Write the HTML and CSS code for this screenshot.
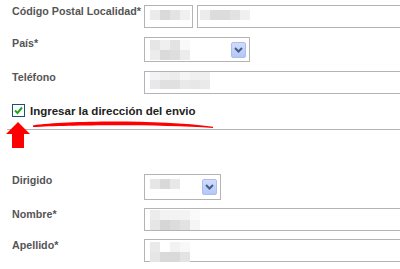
FILE: index.html
```html
<!DOCTYPE html>
<html lang="es">
<head>
    <meta charset="UTF-8">
    <title>Dirección</title>
    <link rel="stylesheet" href="styles.css">
</head>
<body>
    <div class="form">
        <div class="row row-cp">
            <div class="label">Código Postal Localidad*</div>
            <div class="field field-cp"><span class="blur blur-cp"></span></div>
            <div class="field field-city open-end"><span class="blur blur-city"></span></div>
        </div>
        <div class="row row-pais">
            <div class="label">País*</div>
            <div class="field select select-pais">
                <span class="blur blur-pais"></span>
                <span class="drop"><svg width="9" height="6" viewBox="0 0 9 6"><path d="M1 1 L4.5 4.5 L8 1" fill="none" stroke="#4a5c80" stroke-width="2"/></svg></span>
            </div>
        </div>
        <div class="row row-tel">
            <div class="label">Teléfono</div>
            <div class="field field-wide open-end"><span class="blur blur-tel"></span></div>
        </div>

        <div class="check-row">
            <span class="checkbox"><svg width="11" height="11" viewBox="0 0 11 11"><path d="M2 5.5 L4.5 8 L9 2.5" fill="none" stroke="#1fa51f" stroke-width="2"/></svg></span>
            <span class="check-label">Ingresar la dirección del envio</span>
        </div>

        <div class="row row-dir">
            <div class="label">Dirigido</div>
            <div class="field select select-dir">
                <span class="blur blur-dir"></span>
                <span class="drop"><svg width="9" height="6" viewBox="0 0 9 6"><path d="M1 1 L4.5 4.5 L8 1" fill="none" stroke="#4a5c80" stroke-width="2"/></svg></span>
            </div>
        </div>
        <div class="row row-nom">
            <div class="label">Nombre*</div>
            <div class="field field-wide open-end"><span class="blur blur-nom"></span></div>
        </div>
        <div class="row row-ape">
            <div class="label">Apellido*</div>
            <div class="field field-wide open-end"><span class="blur blur-ape"></span></div>
        </div>
    </div>

    <!-- hand-drawn marks over the form -->
    <svg class="marks" width="400" height="269" viewBox="0 0 400 269">
        <path d="M33 125.4 C70 120.4, 160 119.8, 213 126.8 L213 128 C160 124, 70 124.8, 33 127 Z" fill="#ff0000"/>
        <polygon points="18,122 6,134 12,134 12,148 24,148 24,134 30,134" fill="#ff0000"/>
    </svg>
</body>
</html>
```

FILE: styles.css
```css
html, body {
    overflow: hidden;
}
body {
    margin: 0;
    background-color: #ffffff;
    font-family: "Liberation Sans", Arial, sans-serif;
    font-size: 10.7px;
    font-weight: bold;
    color: #555555;
    position: relative;
    width: 400px;
    height: 269px;
}
.form {
    padding-top: 5px;
}
.row {
    display: flex;
    align-items: flex-start;
}
.label {
    width: 132px;
    padding-left: 12px;
    line-height: 13px;
    white-space: nowrap;
    flex-shrink: 0;
}
.field {
    border: 1px solid #b4b4b4;
    box-sizing: border-box;
    height: 23px;
    flex-shrink: 0;
    background-color: #ffffff;
}
.open-end {
    border-right: none; /* runs on past the window edge */
}
.field-cp {
    width: 49px;
}
.field-city {
    width: 203px;
    margin-left: 4px;
}
.field-wide {
    width: 256px;
}
.select {
    display: flex;
    justify-content: space-between;
    align-items: flex-start;
    height: 25px;
}
.select-pais {
    width: 106px;
}
.select-dir {
    width: 77px;
    height: 26px;
}
.drop {
    display: flex;
    align-items: center;
    justify-content: center;
    width: 13px;
    height: 14px;
    margin: 4px 3px 0 0;
    border: 1px solid #a9bdf0;
    border-radius: 2px;
    background: linear-gradient(#d0dcfd, #b3c7f7);
}
.row-cp {
    margin-bottom: 9px;
}
.row-pais {
    margin-bottom: 9px;
}

/* pixelated values */
.blur {
    display: block;
    flex-shrink: 0;
}
.blur-cp {
    width: 40px;
    height: 10px;
    margin: 4px 0 0 5px;
    background: linear-gradient(90deg, #ebebeb 0 10px, #d9d9db 10px 20px, #e3e3e3 20px 30px, #f0f0f0 30px 40px);
}
.blur-city {
    width: 50px;
    height: 10px;
    margin: 4px 0 0 2px;
    background: linear-gradient(90deg, #ececec 0 10px, #dcdcdc 10px 30px, #e2e2e2 30px 40px, #f0f0f0 40px 50px);
}
.blur-pais {
    width: 40px;
    height: 20px;
    margin: 2px 0 0 5px;
    background:
        linear-gradient(90deg, #e6e6e6 0 10px, #efefef 10px 20px, #e3e3e3 20px 30px, #f9f9f9 30px 40px) top / 40px 10px no-repeat,
        linear-gradient(90deg, #ececec 0 10px, #dadada 10px 20px, #dedede 20px 30px, #ececec 30px 40px) bottom / 40px 10px no-repeat;
}
.blur-tel {
    width: 60px;
    height: 17px;
    margin: 0 0 0 5px;
    background:
        linear-gradient(90deg, #f3f3f5 0 10px, #efefef 10px 20px, #ececec 20px 30px, #f5f5f5 30px 40px, #f0f0f0 40px 50px, #efefef 50px 60px) top / 60px 8px no-repeat,
        linear-gradient(90deg, #e8e8ea 0 10px, #e0e0e0 10px 30px, #e9e9e9 30px 40px, #e7e7e7 40px 50px, #eaeaea 50px 60px) bottom / 60px 9px no-repeat;
}
.blur-dir {
    width: 30px;
    height: 10px;
    margin: 4px 0 0 5px;
    background: linear-gradient(90deg, #e6e6e6 0 10px, #d9d9d9 10px 20px, #e8e8e8 20px 30px);
}
.blur-nom {
    width: 50px;
    height: 20px;
    margin: 1px 0 0 5px;
    background:
        linear-gradient(90deg, #ececec 0 10px, #f3f3f3 10px 40px, #fafafa 40px 50px) top / 50px 10px no-repeat,
        linear-gradient(90deg, #e6e6e6 0 10px, #d6d6d6 10px 20px, #dcdcdc 20px 30px, #e2e2e2 30px 40px, #f5f5f5 40px 50px) bottom / 50px 10px no-repeat;
}
.blur-ape {
    width: 40px;
    height: 20px;
    margin: 2px 0 0 5px;
    background:
        linear-gradient(90deg, #e9e9e9 0 10px, #ffffff 10px 20px, #f2f2f2 20px 30px, #f8f8f8 30px 40px) top / 40px 10px no-repeat,
        linear-gradient(90deg, #e6e6e6 0 10px, #d9d9d9 10px 30px, #e3e3e3 30px 40px) bottom / 40px 10px no-repeat;
}

.check-row {
    display: flex;
    align-items: flex-end;
    gap: 5px;
    margin: 10px 0 0 7px;
    padding: 0 0 11px 5px;
    border-bottom: 1px solid #b4b4b4;
}
.checkbox {
    display: flex;
    align-items: center;
    justify-content: center;
    width: 11px;
    height: 11px;
    border: 1px solid #1d4f7c;
    background-color: #ffffff;
    margin-bottom: 1px;
}
.check-label {
    color: #222222;
    font-size: 11.5px;
    line-height: 13px;
}
.row-dir {
    margin-top: 44px;
    margin-bottom: 8px;
}
.row-nom {
    margin-bottom: 8px;
}
.marks {
    position: absolute;
    left: 0;
    top: 0;
    pointer-events: none;
}
```
